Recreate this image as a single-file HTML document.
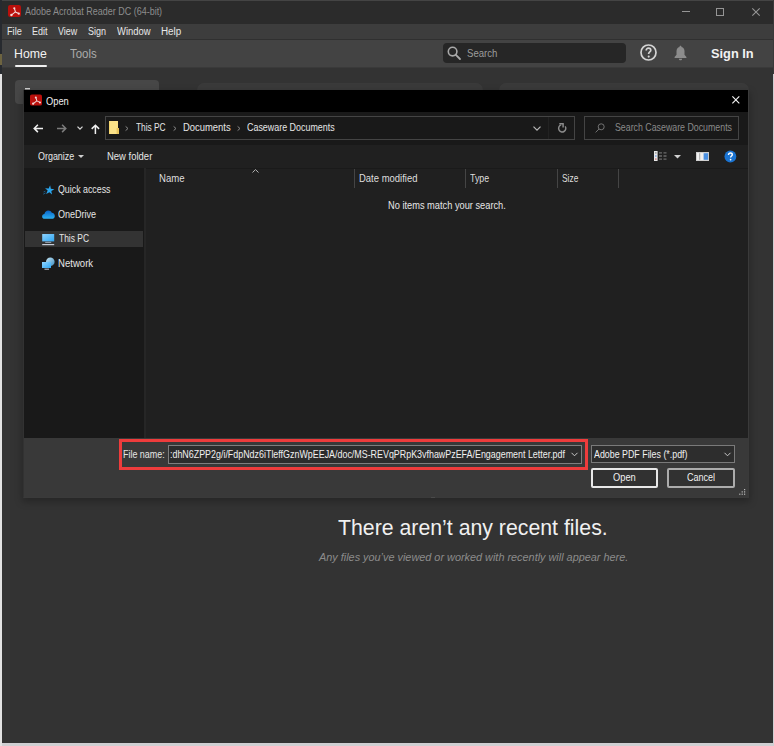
<!DOCTYPE html>
<html><head><meta charset="utf-8">
<style>
*{margin:0;padding:0;box-sizing:border-box}
html,body{width:774px;height:746px;overflow:hidden;background:#cfcfd2;font-family:"Liberation Sans",sans-serif;position:relative}
.a{position:absolute;white-space:nowrap;transform-origin:0 0}
svg{position:absolute;overflow:visible}
</style></head><body>
<!-- left strip -->
<div class="a" style="left:0;top:0;width:2px;height:74px;background:#272a2f"></div>
<div class="a" style="left:0;top:54px;width:2px;height:11px;background:#6e6440"></div>
<div class="a" style="left:0;top:74px;width:2px;height:672px;background:#e2e2e2"></div>
<!-- window -->
<div class="a" style="left:2px;top:0;width:771px;height:743px;background:#333333"></div>
<div class="a" style="left:2px;top:0;width:771px;height:24px;background:#2b2b2b"></div>
<div class="a" style="left:2px;top:0;width:771px;height:1px;background:#444444"></div>
<div class="a" style="left:2px;top:24px;width:771px;height:15px;background:#3d3d3d"></div>
<div class="a" style="left:2px;top:39px;width:771px;height:1px;background:#303030"></div>
<div class="a" style="left:2px;top:40px;width:771px;height:27px;background:#434343"></div>
<div class="a" style="left:2px;top:67px;width:771px;height:1px;background:#3a3a3a"></div>
<div class="a" style="left:773px;top:0;width:1px;height:74px;background:#3a3a3a"></div>
<!-- title logo -->
<svg style="left:8px;top:5px" width="13" height="12" viewBox="0 0 13 12">
 <rect x="0" y="0" width="13" height="12" rx="2.2" fill="#ba100c"/>
 <path d="M6.4 3.4L7.4 6.9 3.6 9.9M7.4 6.9L10.7 8.6" fill="none" stroke="#f2d8d8" stroke-width="1.1"/><circle cx="6.3" cy="3.3" r="1.1" fill="#f2d8d8"/><circle cx="3.4" cy="10" r="1.2" fill="#f2d8d8"/><circle cx="10.8" cy="8.7" r="1.1" fill="#f2d8d8"/>
</svg>
<!-- window controls -->
<div class="a" style="left:682px;top:11px;width:8px;height:1px;background:#959595"></div>
<div class="a" style="left:716px;top:8px;width:8px;height:8px;border:1px solid #959595"></div>
<svg style="left:752px;top:8px" width="8" height="8" viewBox="0 0 8 8"><path d="M0.3 0.3L7.7 7.7M7.7 0.3L0.3 7.7" stroke="#959595" stroke-width="1.1"/></svg>
<!-- home underline -->
<div class="a" style="left:15px;top:65px;width:32px;height:2px;background:#f0f0f0;border-radius:1px"></div>
<!-- top search -->
<div class="a" style="left:443px;top:43px;width:183px;height:20px;background:#262626;border-radius:4px"></div>
<svg style="left:447px;top:46px" width="14" height="14" viewBox="0 0 14 14"><circle cx="5.6" cy="5.6" r="4.3" fill="none" stroke="#a8a8a8" stroke-width="1.6"/><path d="M8.6 8.6L13 13" stroke="#a8a8a8" stroke-width="1.8" stroke-linecap="round"/></svg>
<!-- help -->
<svg style="left:640px;top:44px" width="17" height="17" viewBox="0 0 17 17"><circle cx="8.5" cy="8.5" r="7.5" fill="none" stroke="#d4d4d4" stroke-width="1.7"/><path d="M6.2 6.5c0-1.4 1-2.3 2.3-2.3s2.3.9 2.3 2.1c0 1.6-2.1 1.7-2.1 3.3v.5" fill="none" stroke="#d4d4d4" stroke-width="1.7"/><circle cx="8.7" cy="12.6" r="1.05" fill="#d4d4d4"/></svg>
<!-- bell -->
<svg style="left:674px;top:45px" width="13" height="16" viewBox="0 0 13 16"><path d="M6.5 0.8c.7 0 1 .5 1 1.1 2 .5 3 2.2 3 4.3v3.6l1.9 2.2v.9H0.6v-.9l1.9-2.2V6.2c0-2.1 1-3.8 3-4.3 0-.6.3-1.1 1-1.1z" fill="#8c8c8c"/><path d="M4.9 13.8h3.2c0 1-.7 1.5-1.6 1.5s-1.6-.5-1.6-1.5z" fill="#8c8c8c"/></svg>
<!-- cards -->
<div class="a" style="left:15px;top:80px;width:144px;height:24px;background:#474747;border-radius:4px"></div>
<div class="a" style="left:197px;top:83px;width:286px;height:40px;background:#3a3a3a;border-radius:7px"></div>
<div class="a" style="left:499px;top:83px;width:250px;height:40px;background:#3a3a3a;border-radius:7px"></div>
<!-- dialog -->
<div class="a" style="left:23px;top:90px;width:726px;height:408px;background:#393939;border:1px solid #3a3a3a;border-left-color:#323232;border-top:0;box-shadow:0 3px 7px 1px rgba(0,0,0,.25)"></div>
<div class="a" style="left:24px;top:90px;width:724px;height:22px;background:#000"></div>
<div class="a" style="left:24px;top:112px;width:724px;height:33px;background:#191919"></div>
<div class="a" style="left:24px;top:145px;width:724px;height:23px;background:#202020"></div>
<div class="a" style="left:24px;top:168px;width:120px;height:270px;background:#191919"></div>
<div class="a" style="left:144px;top:168px;width:2px;height:270px;background:#262626"></div>
<div class="a" style="left:146px;top:168px;width:602px;height:270px;background:#202020"></div>
<div class="a" style="left:146px;top:168px;width:602px;height:1px;background:#1a1a1a"></div>
<div class="a" style="left:24px;top:438px;width:724px;height:59px;background:#393939"></div>
<!-- dialog title icon -->
<svg style="left:30px;top:94px" width="12" height="12" viewBox="0 0 13 12">
 <rect x="0" y="0" width="13" height="12" rx="2" fill="#ba100c"/>
 <path d="M6.4 3.4L7.4 6.9 3.6 9.9M7.4 6.9L10.7 8.6" fill="none" stroke="#f2d8d8" stroke-width="1.1"/><circle cx="6.3" cy="3.3" r="1.1" fill="#f2d8d8"/><circle cx="3.4" cy="10" r="1.2" fill="#f2d8d8"/><circle cx="10.8" cy="8.7" r="1.1" fill="#f2d8d8"/>
</svg>
<svg style="left:732.4px;top:96.4px" width="7.7" height="7.7" viewBox="0 0 8 8"><path d="M0.4 0.4L7.6 7.6M7.6 0.4L0.4 7.6" stroke="#f4f4f4" stroke-width="1.2"/></svg>
<!-- nav arrows -->
<svg style="left:33px;top:124px" width="10" height="9" viewBox="0 0 10 9"><path d="M10 4.4H1.3M4.9 0.7L1.2 4.4l3.7 3.7" fill="none" stroke="#f0f0f0" stroke-width="1.5"/></svg>
<svg style="left:56.5px;top:124px" width="10" height="9" viewBox="0 0 10 9"><path d="M0 4.4h8.7M5.1 0.7l3.7 3.7-3.7 3.7" fill="none" stroke="#7c7c7c" stroke-width="1.5"/></svg>
<svg style="left:76.5px;top:125.5px" width="6" height="4" viewBox="0 0 6 4"><path d="M0.5 0.6L3 3.1 5.5 0.6" fill="none" stroke="#d8d8d8" stroke-width="1.3"/></svg>
<svg style="left:91px;top:124px" width="9" height="10" viewBox="0 0 9 10"><path d="M4.4 10V1.3M0.7 4.9l3.7-3.7 3.7 3.7" fill="none" stroke="#f0f0f0" stroke-width="1.5"/></svg>
<!-- address box -->
<div class="a" style="left:105px;top:116px;width:470px;height:24px;border:1px solid #444"></div>
<div class="a" style="left:548px;top:117px;width:1px;height:22px;background:#222222"></div>
<svg style="left:109px;top:121px" width="10" height="13" viewBox="0 0 10 13"><rect x="0" y="0" width="9" height="13" fill="#fbe288"/><rect x="7.6" y="7" width="2.4" height="6" fill="#e9c55c"/><rect x="0" y="0" width="0.8" height="13" fill="#f5d469"/></svg>
<svg style="left:125px;top:126px" width="4" height="5" viewBox="0 0 4 5"><path d="M0.6 0.4L3 2.5 0.6 4.6" fill="none" stroke="#8a8a8a" stroke-width="1"/></svg>
<svg style="left:173px;top:126px" width="4" height="5" viewBox="0 0 4 5"><path d="M0.6 0.4L3 2.5 0.6 4.6" fill="none" stroke="#8a8a8a" stroke-width="1"/></svg>
<svg style="left:237px;top:126px" width="4" height="5" viewBox="0 0 4 5"><path d="M0.6 0.4L3 2.5 0.6 4.6" fill="none" stroke="#8a8a8a" stroke-width="1"/></svg>
<svg style="left:533px;top:126px" width="8" height="5" viewBox="0 0 8 5"><path d="M0.5 0.7L4 4.2 7.5 0.7" fill="none" stroke="#b8b8b8" stroke-width="1.2"/></svg>
<svg style="left:557px;top:121px" width="11" height="12" viewBox="0 0 11 12"><path d="M4.2 3.9A3.6 3.6 0 1 0 8.2 5.3" fill="none" stroke="#8c8c8c" stroke-width="1.45"/><path d="M2.3 2.7H6.1V6.4" fill="none" stroke="#8c8c8c" stroke-width="1.45"/></svg>
<!-- search box -->
<div class="a" style="left:584px;top:116px;width:155px;height:24px;border:1px solid #444"></div>
<svg style="left:595px;top:123px" width="10" height="10" viewBox="0 0 10 10"><circle cx="6.2" cy="3.8" r="3" fill="none" stroke="#7c7c7c" stroke-width="0.9"/><path d="M4 6L0.6 9.4" stroke="#7c7c7c" stroke-width="0.9"/></svg>
<!-- toolbar -->
<svg style="left:78px;top:155px" width="6" height="4" viewBox="0 0 6 4"><path d="M0 0h6L3 3z" fill="#d0d0d0"/></svg>
<svg style="left:654px;top:151px" width="13" height="10" viewBox="0 0 13 10"><rect x="0" y="0" width="3.6" height="10" fill="#e8e8e8"/><rect x="1" y="1.2" width="1.6" height="1.4" fill="#9a9a9a"/><rect x="1" y="4.3" width="1.6" height="1.4" fill="#7aa0e0"/><rect x="1" y="7.4" width="1.6" height="1.4" fill="#d08080"/><path d="M5 1.9h3M9.5 1.9h3M5 5h3M9.5 5h3M5 8.1h3M9.5 8.1h3" stroke="#6a6a6a" stroke-width="1.3"/></svg>
<svg style="left:674px;top:155px" width="7" height="4" viewBox="0 0 7 4"><path d="M0 0h7L3.5 3.5z" fill="#d0d0d0"/></svg>
<svg style="left:696px;top:152px" width="13" height="9" viewBox="0 0 13 9"><rect x="0.5" y="0.5" width="12" height="8" fill="#f0f0f0" stroke="#cfcfcf"/><rect x="3.3" y="1.2" width="0.9" height="6.6" fill="#9a9a9a"/><rect x="7.6" y="1.2" width="4.5" height="6.6" fill="#4a90e2"/></svg>
<svg style="left:724px;top:150px" width="13" height="13" viewBox="0 0 13 13"><circle cx="6.4" cy="6.5" r="5.9" fill="#1a73d1"/><path d="M4.5 4.9c0-1.2.9-1.9 1.9-1.9 1.1 0 1.9.7 1.9 1.7 0 1.3-1.7 1.4-1.7 2.8" fill="none" stroke="#fff" stroke-width="1.4"/><circle cx="6.6" cy="9.6" r="0.85" fill="#fff"/></svg>
<!-- nav icons -->
<svg style="left:42.7px;top:184.8px" width="11.5" height="10.5" viewBox="0 0 11.5 10.5"><path d="M6.6 0.2l1.1 3.4 3.6.1-2.9 2.1 1.1 3.5-2.9-2.1-3 2.1 1.1-3.5L1.9 3.7l3.6-.1z" fill="#2aa6ee" transform="rotate(6 6.6 5.2)"/><path d="M0.2 9.2l2.3-1.2M0.6 7l1.8-.8" stroke="#1a6aa0" stroke-width="0.8"/></svg>
<svg style="left:42px;top:210px" width="13" height="9" viewBox="0 0 13 9"><defs><linearGradient id="cg" x1="0" y1="0" x2="0" y2="1"><stop offset="0" stop-color="#0a64c8"/><stop offset="1" stop-color="#2cb0f2"/></linearGradient></defs><path d="M2.8 8.8C1.2 8.8 0.1 7.8 0.1 6.4c0-1.3 1-2.3 2.3-2.4C2.9 1.9 4.4 0.5 6.3 0.5c1.6 0 2.9.9 3.5 2.3 1.8.1 3 1.5 3 3.1 0 1.6-1.1 2.9-2.9 2.9z" fill="url(#cg)"/></svg>
<div class="a" style="left:25px;top:231px;width:118px;height:16px;background:#333333"></div>
<svg style="left:42px;top:234px" width="13" height="12" viewBox="0 0 13 12"><defs><linearGradient id="mg" x1="0" y1="0" x2="1" y2="1"><stop offset="0" stop-color="#8fd3ff"/><stop offset="1" stop-color="#2fa6f2"/></linearGradient></defs><rect x="0.2" y="0" width="12" height="7.4" fill="url(#mg)"/><rect x="3.2" y="7.8" width="6" height="1.1" fill="#9aa4b0"/><rect x="0.2" y="10" width="12" height="1.2" fill="#c4ccd8"/></svg>
<svg style="left:42px;top:257px" width="13" height="14" viewBox="0 0 13 14"><defs><linearGradient id="ng" x1="0" y1="0" x2="1" y2="1"><stop offset="0" stop-color="#c8e8f8"/><stop offset="1" stop-color="#3a8cc0"/></linearGradient><linearGradient id="mg2" x1="0" y1="0" x2="1" y2="1"><stop offset="0" stop-color="#8fd3ff"/><stop offset="1" stop-color="#2fa6f2"/></linearGradient></defs><circle cx="8.3" cy="4.8" r="4.3" fill="url(#ng)"/><rect x="0" y="5" width="9" height="6" fill="url(#mg2)"/><rect x="2.5" y="11.6" width="4.5" height="1.2" fill="#a8b0bc"/></svg>
<!-- column headers -->
<svg style="left:252px;top:169px" width="7" height="4" viewBox="0 0 7 4"><path d="M0.5 3.5L3.5 0.6 6.5 3.5" fill="none" stroke="#b4b4b4" stroke-width="1"/></svg>
<div class="a" style="left:354px;top:169px;width:1px;height:19px;background:#454545"></div>
<div class="a" style="left:465px;top:169px;width:1px;height:19px;background:#454545"></div>
<div class="a" style="left:557px;top:169px;width:1px;height:19px;background:#454545"></div>
<div class="a" style="left:618px;top:169px;width:1px;height:19px;background:#454545"></div>
<!-- bottom -->
<div class="a" style="left:119px;top:439px;width:469px;height:31px;border:3px solid #ee3c3c"></div>
<div class="a" style="left:168px;top:445px;width:414px;height:19px;border:1px solid #7e7e7e;background:#2c2c2c"></div>
<svg style="left:571px;top:452px" width="7" height="5" viewBox="0 0 7 5"><path d="M0.5 0.8L3.5 3.8 6.5 0.8" fill="none" stroke="#c8c8c8" stroke-width="1"/></svg>
<div class="a" style="left:591px;top:445px;width:144px;height:18px;border:1px solid #7a7a7a;background:#2d2d2d"></div>
<svg style="left:724px;top:452px" width="7" height="5" viewBox="0 0 7 5"><path d="M0.5 0.8L3.5 3.8 6.5 0.8" fill="none" stroke="#c8c8c8" stroke-width="1"/></svg>
<div class="a" style="left:591px;top:468px;width:67px;height:20px;border:2px solid #e8e8e8;background:#313131;border-radius:2px"></div>
<div class="a" style="left:667px;top:468px;width:68px;height:20px;border:2px solid #acacac;background:#313131;border-radius:2px"></div>
<svg style="left:739px;top:489px" width="7" height="6" viewBox="0 0 7 6"><rect x="5" y="0" width="1.2" height="1.2" fill="#bbb"/><rect x="2.6" y="2.3" width="1.2" height="1.2" fill="#bbb"/><rect x="5" y="2.3" width="1.2" height="1.2" fill="#bbb"/><rect x="0.2" y="4.6" width="1.2" height="1.2" fill="#bbb"/><rect x="2.6" y="4.6" width="1.2" height="1.2" fill="#bbb"/><rect x="5" y="4.6" width="1.2" height="1.2" fill="#bbb"/></svg>
<div class="a" style="left:431px;top:497px;width:4px;height:1px;background:#4a4a4a"></div>
<div class="a" style="left:25px;top:88px;width:5px;height:1px;background:#c8c8c8"></div><div class="a" style="left:25px;top:89px;width:5px;height:1px;background:#7a7a7a"></div>

<div class="a" style="left:24.80px;top:7px;font-size:10.145px;line-height:10.145px;color:#8d8d8d;font-weight:normal;font-style:normal;transform:scaleX(0.8859)">Adobe Acrobat Reader DC (64-bit)</div>
<div class="a" style="left:7.17px;top:26px;font-size:10.580px;line-height:10.580px;color:#e8e8e8;font-weight:normal;font-style:normal;transform:scaleX(0.8660)">File</div>
<div class="a" style="left:31.88px;top:26px;font-size:10.580px;line-height:10.580px;color:#e8e8e8;font-weight:normal;font-style:normal;transform:scaleX(0.8502)">Edit</div>
<div class="a" style="left:58.40px;top:26px;font-size:10.580px;line-height:10.580px;color:#e8e8e8;font-weight:normal;font-style:normal;transform:scaleX(0.8412)">View</div>
<div class="a" style="left:88.04px;top:26px;font-size:10.580px;line-height:10.580px;color:#e8e8e8;font-weight:normal;font-style:normal;transform:scaleX(0.8483)">Sign</div>
<div class="a" style="left:116.60px;top:26px;font-size:10.580px;line-height:10.580px;color:#e8e8e8;font-weight:normal;font-style:normal;transform:scaleX(0.8910)">Window</div>
<div class="a" style="left:160.51px;top:26px;font-size:10.580px;line-height:10.580px;color:#e8e8e8;font-weight:normal;font-style:normal;transform:scaleX(0.9303)">Help</div>
<div class="a" style="left:14.22px;top:47px;font-size:13.043px;line-height:13.043px;color:#f2f2f2;font-weight:normal;font-style:normal;transform:scaleX(0.9436)">Home</div>
<div class="a" style="left:70.17px;top:47px;font-size:13.043px;line-height:13.043px;color:#ababab;font-weight:normal;font-style:normal;transform:scaleX(0.8759)">Tools</div>
<div class="a" style="left:467.12px;top:48px;font-size:11.304px;line-height:11.304px;color:#9c9c9c;font-weight:normal;font-style:normal;transform:scaleX(0.8494)">Search</div>
<div class="a" style="left:711.24px;top:47px;font-size:13.286px;line-height:13.286px;color:#f2f2f2;font-weight:bold;font-style:normal;transform:scaleX(0.9651)">Sign In</div>
<div class="a" style="left:46.03px;top:97px;font-size:10.145px;line-height:10.145px;color:#f0f0f0;font-weight:normal;font-style:normal;transform:scaleX(0.9185)">Open</div>
<div class="a" style="left:136.13px;top:123px;font-size:10.145px;line-height:10.145px;color:#e6e6e6;font-weight:normal;font-style:normal;transform:scaleX(0.8214)">This PC</div>
<div class="a" style="left:182.54px;top:123px;font-size:10.145px;line-height:10.145px;color:#e6e6e6;font-weight:normal;font-style:normal;transform:scaleX(0.9304)">Documents</div>
<div class="a" style="left:247.35px;top:123px;font-size:10.145px;line-height:10.145px;color:#e6e6e6;font-weight:normal;font-style:normal;transform:scaleX(0.8799)">Caseware Documents</div>
<div class="a" style="left:614.65px;top:123px;font-size:10.145px;line-height:10.145px;color:#8a8a8a;font-weight:normal;font-style:normal;transform:scaleX(0.8698)">Search Caseware Documents</div>
<div class="a" style="left:37.74px;top:152px;font-size:10.145px;line-height:10.145px;color:#e6e6e6;font-weight:normal;font-style:normal;transform:scaleX(0.8814)">Organize</div>
<div class="a" style="left:106.74px;top:152px;font-size:10.145px;line-height:10.145px;color:#e6e6e6;font-weight:normal;font-style:normal;transform:scaleX(0.9359)">New folder</div>
<div class="a" style="left:58.05px;top:185px;font-size:10.145px;line-height:10.145px;color:#e6e6e6;font-weight:normal;font-style:normal;transform:scaleX(0.8723)">Quick access</div>
<div class="a" style="left:58.34px;top:210px;font-size:10.145px;line-height:10.145px;color:#e6e6e6;font-weight:normal;font-style:normal;transform:scaleX(0.8912)">OneDrive</div>
<div class="a" style="left:58.53px;top:234px;font-size:10.145px;line-height:10.145px;color:#e6e6e6;font-weight:normal;font-style:normal;transform:scaleX(0.8327)">This PC</div>
<div class="a" style="left:57.93px;top:259px;font-size:10.145px;line-height:10.145px;color:#e6e6e6;font-weight:normal;font-style:normal;transform:scaleX(0.9453)">Network</div>
<div class="a" style="left:158.93px;top:174px;font-size:10.145px;line-height:10.145px;color:#dedede;font-weight:normal;font-style:normal;transform:scaleX(0.9466)">Name</div>
<div class="a" style="left:359.24px;top:174px;font-size:10.145px;line-height:10.145px;color:#dedede;font-weight:normal;font-style:normal;transform:scaleX(0.9361)">Date modified</div>
<div class="a" style="left:470.32px;top:174px;font-size:10.145px;line-height:10.145px;color:#dedede;font-weight:normal;font-style:normal;transform:scaleX(0.8728)">Type</div>
<div class="a" style="left:561.96px;top:174px;font-size:10.145px;line-height:10.145px;color:#dedede;font-weight:normal;font-style:normal;transform:scaleX(0.8279)">Size</div>
<div class="a" style="left:388.46px;top:201px;font-size:10.145px;line-height:10.145px;color:#e6e6e6;font-weight:normal;font-style:normal;transform:scaleX(0.9144)">No items match your search.</div>
<div class="a" style="left:123.09px;top:450px;font-size:10.145px;line-height:10.145px;color:#e6e6e6;font-weight:normal;font-style:normal;transform:scaleX(0.8804)">File name:</div>
<div class="a" style="left:170.20px;top:450px;font-size:10.145px;line-height:10.145px;color:#f0f0f0;font-weight:normal;font-style:normal;transform:scaleX(0.8788)">:dhN6ZPP2g/i/FdpNdz6iTleffGznWpEEJA/doc/MS-REVqPRpK3vfhawPzEFA/Engagement Letter.pdf</div>
<div class="a" style="left:594.00px;top:450px;font-size:10.145px;line-height:10.145px;color:#f0f0f0;font-weight:normal;font-style:normal;transform:scaleX(0.8744)">Adobe PDF Files (*.pdf)</div>
<div class="a" style="left:612.93px;top:473px;font-size:10.145px;line-height:10.145px;color:#f0f0f0;font-weight:normal;font-style:normal;transform:scaleX(0.9185)">Open</div>
<div class="a" style="left:687.25px;top:473px;font-size:10.145px;line-height:10.145px;color:#f0f0f0;font-weight:normal;font-style:normal;transform:scaleX(0.8902)">Cancel</div>
<div class="a" style="left:338.27px;top:517px;font-size:21.884px;line-height:21.884px;color:#f0f0f0;font-weight:normal;font-style:normal;transform:scaleX(0.9728)">There aren’t any recent files.</div>
<div class="a" style="left:319.04px;top:552px;font-size:10.870px;line-height:10.870px;color:#8c8c8c;font-weight:normal;font-style:italic;transform:scaleX(1.0007)">Any files you’ve viewed or worked with recently will appear here.</div>
</body></html>
